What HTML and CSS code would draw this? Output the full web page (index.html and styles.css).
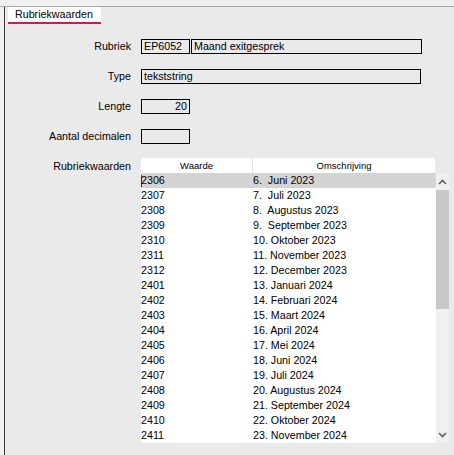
FILE: index.html
```html
<!DOCTYPE html>
<html>
<head>
<meta charset="utf-8">
<link rel="stylesheet" href="styles.css">
</head>
<body>
<div class="top"></div>
<div class="frame">
  <div class="tabbar"><div class="tab">Rubriekwaarden</div></div>
  <div class="form">
    <div class="lbl">Rubriek</div>
    <div class="fields">
      <div class="field w-short">EP6052</div>
      <div class="field w-desc">Maand exitgesprek</div>
    </div>
    <div class="lbl">Type</div>
    <div class="fields"><div class="field w-long">tekststring</div></div>
    <div class="lbl">Lengte</div>
    <div class="fields"><div class="field w-short num">20</div></div>
    <div class="lbl">Aantal decimalen</div>
    <div class="fields"><div class="field w-short"></div></div>
    <div class="lbl">Rubriekwaarden</div>
    <div class="grid">
      <div class="head">
        <div class="hcol c1">Waarde</div>
        <div class="hcol c2">Omschrijving</div>
      </div>
      <div class="bodywrap">
        <div class="rows">
          <div class="r sel"><span class="c1"><span class="caret"></span>2306</span><span class="c2">6.  Juni 2023</span></div>
          <div class="r"><span class="c1">2307</span><span class="c2">7.  Juli 2023</span></div>
          <div class="r"><span class="c1">2308</span><span class="c2">8.  Augustus 2023</span></div>
          <div class="r"><span class="c1">2309</span><span class="c2">9.  September 2023</span></div>
          <div class="r"><span class="c1">2310</span><span class="c2">10. Oktober 2023</span></div>
          <div class="r"><span class="c1">2311</span><span class="c2">11. November 2023</span></div>
          <div class="r"><span class="c1">2312</span><span class="c2">12. December 2023</span></div>
          <div class="r"><span class="c1">2401</span><span class="c2">13. Januari 2024</span></div>
          <div class="r"><span class="c1">2402</span><span class="c2">14. Februari 2024</span></div>
          <div class="r"><span class="c1">2403</span><span class="c2">15. Maart 2024</span></div>
          <div class="r"><span class="c1">2404</span><span class="c2">16. April 2024</span></div>
          <div class="r"><span class="c1">2405</span><span class="c2">17. Mei 2024</span></div>
          <div class="r"><span class="c1">2406</span><span class="c2">18. Juni 2024</span></div>
          <div class="r"><span class="c1">2407</span><span class="c2">19. Juli 2024</span></div>
          <div class="r"><span class="c1">2408</span><span class="c2">20. Augustus 2024</span></div>
          <div class="r"><span class="c1">2409</span><span class="c2">21. September 2024</span></div>
          <div class="r"><span class="c1">2410</span><span class="c2">22. Oktober 2024</span></div>
          <div class="r"><span class="c1">2411</span><span class="c2">23. November 2024</span></div>
        </div>
        <div class="sbar">
          <div class="arrow"><svg width="9" height="6" viewBox="0 0 9 6"><path d="M1 5 L4.5 1.5 L8 5" fill="none" stroke="#606060" stroke-width="1.6"/></svg></div>
          <div class="thumb"></div>
          <div class="track"></div>
          <div class="arrow"><svg width="9" height="6" viewBox="0 0 9 6"><path d="M1 1 L4.5 4.5 L8 1" fill="none" stroke="#606060" stroke-width="1.6"/></svg></div>
        </div>
      </div>
    </div>
  </div>
</div>
</body>
</html>
```
FILE: styles.css
```css
html, body {
  margin: 0;
  padding: 0;
}
body {
  background: #f0f0f0;
  font-family: "Liberation Sans", Arial, sans-serif;
  font-size: 10.7px;
  color: #000;
  width: 454px;
  height: 455px;
  overflow: hidden;
}
.top {
  height: 6px;
  border-bottom: 1px solid #a8a8a8;
}
.frame {
  margin-left: 4px;
  border-left: 1px solid #3a3a3a;
  background: #eaeaea;
  height: 448px;
}
.tabbar {
  display: flex;
  padding-left: 3px;
}
.tab {
  width: 86px;
  height: 15px;
  line-height: 15px;
  padding-left: 7px;
  background: #ffffff;
  border-bottom: 2px solid #dc1450;
}
.form {
  display: grid;
  grid-template-columns: 126px 308px;
  column-gap: 10px;
  row-gap: 15px;
  margin-top: 15px;
}
.lbl {
  text-align: right;
  height: 15px;
  line-height: 15px;
  white-space: nowrap;
}
.fields {
  display: flex;
  gap: 1px;
}
.field {
  box-sizing: border-box;
  height: 15px;
  line-height: 13px;
  border: 1px solid #000;
  padding: 0 2px;
  white-space: nowrap;
  overflow: hidden;
}
.w-short { width: 49px; }
.w-desc { width: 231px; }
.w-long { width: 280px; }
.num { text-align: right; }
.grid {
  margin-top: -1px;
  width: 308px;
}
.head {
  display: flex;
  width: 294px;
  height: 15px;
  background: #ffffff;
  font-size: 9.5px;
  line-height: 15px;
}
.hcol { text-align: center; }
.head .c1 {
  width: 111px;
  border-right: 1px solid #e2e2e2;
}
.head .c2 { width: 182px; }
.bodywrap {
  display: flex;
  height: 270px;
}
.rows {
  width: 295px;
  background: #ffffff;
}
.r {
  display: flex;
  height: 15px;
  line-height: 15px;
  white-space: pre;
}
.r.sel { background: #d4d4d4; }
.r .c1 {
  width: 112px;
  position: relative;
}
.r .c2 { flex: 1; }
.caret {
  position: absolute;
  left: 0;
  top: 2px;
  height: 12px;
  border-left: 1px solid #333;
}
.sbar {
  width: 13px;
  display: flex;
  flex-direction: column;
  background: #f0f0f0;
}
.arrow {
  height: 17px;
  display: flex;
  align-items: center;
  justify-content: center;
}
.thumb {
  height: 119px;
  background: #c8c8c8;
}
.track { flex: 1; }
```
